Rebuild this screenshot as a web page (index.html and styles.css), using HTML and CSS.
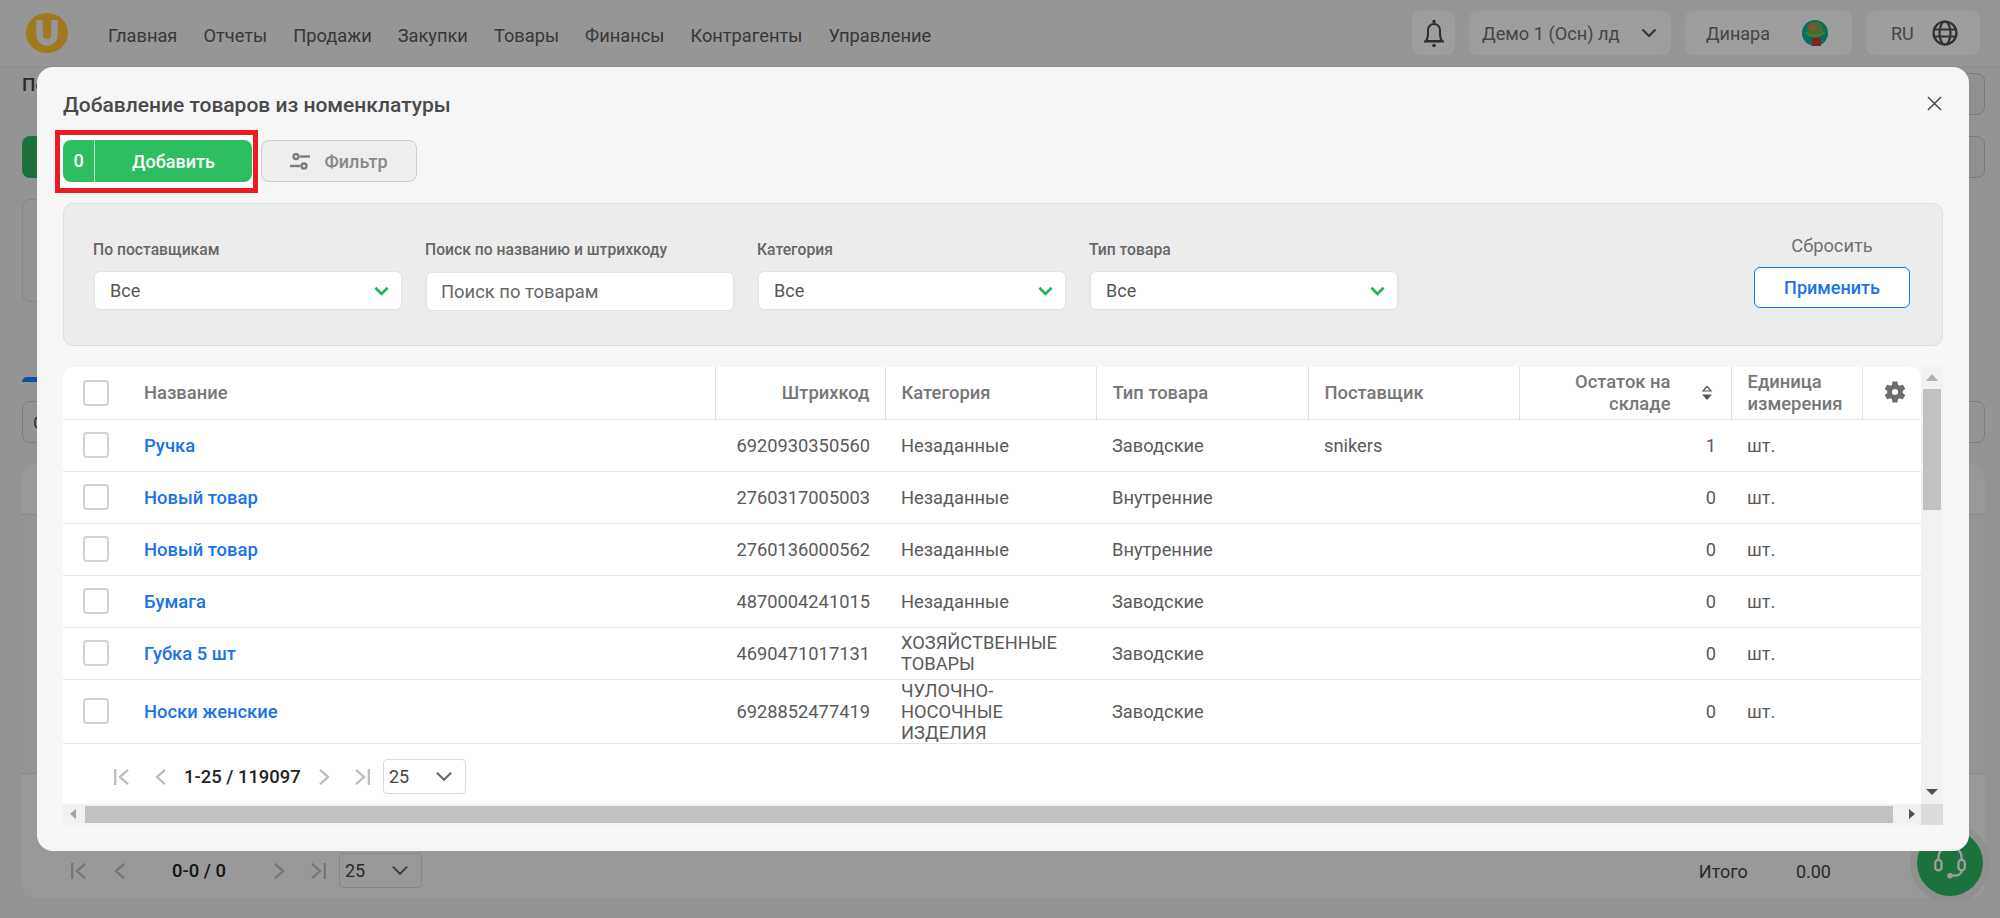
FILE: index.html
```html
<!DOCTYPE html>
<html lang="ru">
<head>
<meta charset="utf-8">
<title>Добавление товаров из номенклатуры</title>
<link rel="stylesheet" href="styles.css">
</head>
<body>
<svg class="sprite" aria-hidden="true">
  <symbol id="chev" viewBox="0 0 16 10"><path d="M1.500 1.500 8 8l6.500-6.500" fill="none" stroke="currentColor"/></symbol>
  <symbol id="first" viewBox="0 0 15 16"><path d="M1.200 0v16" stroke="currentColor" fill="none"/><path d="M14 .8 6 8l8 7.200" stroke="currentColor" fill="none"/></symbol>
  <symbol id="prev" viewBox="0 0 11 16"><path d="M10 .8 2 8l8 7.200" stroke="currentColor" fill="none"/></symbol>
  <symbol id="next" viewBox="0 0 11 16"><path d="M1 .8 9 8l-8 7.200" stroke="currentColor" fill="none"/></symbol>
  <symbol id="last" viewBox="0 0 15 16"><path d="M13.800 0v16" stroke="currentColor" fill="none"/><path d="M1 .8 9 8l-8 7.200" stroke="currentColor" fill="none"/></symbol>
</svg>

<div class="page">
  <header class="topbar">
    <svg class="logo" viewBox="0 0 42 40"><ellipse cx="21" cy="20" rx="21" ry="20" fill="#ffc432"/><path d="M13.500 7v15a7.500 7.500 0 0 0 15 0V7" fill="none" stroke="#f2f2f2" stroke-width="6.500"/></svg>
    <nav class="nav">
      <a>Главная</a><a>Отчеты</a><a>Продажи</a><a>Закупки</a><a>Товары</a><a>Финансы</a><a>Контрагенты</a><a>Управление</a>
    </nav>
    <div class="top-actions">
      <div class="top-box bell-box">
        <svg class="bell" viewBox="0 0 22 30"><path d="M3 23c1.500-2 2-4 2-8v-3a6 6 0 0 1 12 0v3c0 4 .5 6 2 8z" fill="none" stroke="#4a4a4a" stroke-width="2"/><path d="M11 2v3" stroke="#4a4a4a" stroke-width="3"/><path d="M1 23.500h20" stroke="#4a4a4a" stroke-width="2"/><circle cx="11" cy="27.500" r="1.800" fill="#4a4a4a"/></svg>
      </div>
      <div class="top-box demo-box"><span>Демо 1 (Осн) лд</span><svg class="top-chev"><use href="#chev"/></svg></div>
      <div class="top-box user-box"><span>Динара</span>
        <svg class="avatar" viewBox="0 0 26 26"><circle cx="13" cy="13" r="13" fill="#0fae9a"/><circle cx="13" cy="9.500" r="8" fill="#7fa84e"/><circle cx="10.500" cy="7" r="3.500" fill="#c98a5a"/><path d="M3.500 12.500l4.500 3h10l4.500-3.500" stroke="#7fd048" stroke-width="1.800" fill="none"/><path d="M10 18h9v8h-9z" fill="#d23b30"/></svg>
      </div>
      <div class="top-box lang-box"><span>RU</span>
        <svg class="globe" viewBox="0 0 26 26" fill="none" stroke="#4f4f4f" stroke-width="2.200"><circle cx="13" cy="13" r="11.500"/><ellipse cx="13" cy="13" rx="5.500" ry="11.500"/><path d="M2 9.500h22M2 16.500h22"/></svg>
      </div>
    </div>
  </header>

  <main class="under">
    <h1 class="under-title">Поступление</h1>
    <div class="under-actions">
      <div class="under-green"></div>
      <div class="under-side-stack"><div class="under-small"></div><div class="under-small"></div></div>
    </div>
    <div class="under-panel"></div>
    <div class="under-tab"></div>
    <div class="under-search">Склад</div>
    <div class="under-card">
      <div class="under-head"></div>
      <div class="under-body"></div>
      <div class="under-foot">
        <div class="pager pager-under">
          <svg class="pg pg-first"><use href="#first"/></svg>
          <svg class="pg pg-prev"><use href="#prev"/></svg>
          <b class="pg-count">0-0 / 0</b>
          <svg class="pg pg-next"><use href="#next"/></svg>
          <svg class="pg pg-last"><use href="#last"/></svg>
          <div class="pg-size"><span>25</span><svg class="pg-chev"><use href="#chev"/></svg></div>
        </div>
        <div class="under-total"><span>Итого</span><span>0.00</span></div>
      </div>
    </div>
  </main>

  <div class="chat">
    <svg viewBox="0 0 36 36" fill="none" stroke="#fff" stroke-width="2.200"><path d="M7 16v-3a11 11 0 0 1 22 0v3"/><rect x="4" y="15" width="6" height="10" rx="3"/><rect x="26" y="15" width="6" height="10" rx="3"/><path d="M29 25c0 3-3 5-7 5h-4"/><circle cx="18" cy="30" r="1.500" fill="#fff"/></svg>
  </div>

  <div class="overlay"></div>

  <section class="modal">
    <div class="modal-head">
      <h2 class="modal-title">Добавление товаров из номенклатуры</h2>
      <svg class="close" viewBox="0 0 16 16"><path d="M1 1l14 14M15 1 1 15" stroke="#3c4a55" stroke-width="1.600"/></svg>
    </div>

    <div class="toolbar">
      <div class="mark">
        <button class="add-btn"><span class="add-count">0</span><span class="add-label">Добавить</span></button>
      </div>
      <button class="filter-btn">
        <svg class="filter-ico" viewBox="0 0 20 17" fill="none" stroke="#7d7d7d" stroke-width="2.400"><circle cx="6" cy="3.500" r="2.500"/><path d="M10 3.500h10"/><circle cx="14" cy="13" r="2.500"/><path d="M0 13h10"/></svg>
        <span>Фильтр</span>
      </button>
    </div>

    <div class="filters">
      <div class="field">
        <label class="field-label">По поставщикам</label>
        <div class="select"><span>Все</span><svg class="sel-chev"><use href="#chev"/></svg></div>
      </div>
      <div class="field">
        <label class="field-label">Поиск по названию и штрихкоду</label>
        <div class="search">Поиск по товарам</div>
      </div>
      <div class="field">
        <label class="field-label">Категория</label>
        <div class="select"><span>Все</span><svg class="sel-chev"><use href="#chev"/></svg></div>
      </div>
      <div class="field">
        <label class="field-label">Тип товара</label>
        <div class="select"><span>Все</span><svg class="sel-chev"><use href="#chev"/></svg></div>
      </div>
      <div class="filter-actions">
        <span class="reset">Сбросить</span>
        <button class="apply">Применить</button>
      </div>
    </div>

    <div class="tablebox">
      <div class="table-area">
        <table class="grid">
          <colgroup>
            <col class="c-name"><col class="c-code"><col class="c-cat"><col class="c-type"><col class="c-sup"><col class="c-rest"><col class="c-unit"><col class="c-gear">
          </colgroup>
          <thead>
            <tr>
              <th><div class="name-cell"><i class="check"></i><span>Название</span></div></th>
              <th class="right">Штрихкод</th>
              <th>Категория</th>
              <th>Тип товара</th>
              <th>Поставщик</th>
              <th class="right rest-head"><div class="rest-wrap"><span>Остаток на складе</span>
                <svg class="sort" viewBox="0 0 12 16"><path d="M6 1.500 10 6H2z" fill="none" stroke="#555" stroke-width="1.200"/><path d="M1 9.500h10L6 15z" fill="#555"/></svg></div></th>
              <th>Единица измерения</th>
              <th class="gear-cell">
                <svg class="gear" viewBox="0 0 24 24"><path fill="#6e6e6e" fill-rule="evenodd" d="M19.140 12.940c.04-.3.06-.61.06-.94 0-.32-.02-.64-.07-.94l2.030-1.580a.49.49 0 0 0 .12-.61l-1.920-3.320a.488.488 0 0 0-.59-.22l-2.390.96c-.5-.38-1.030-.7-1.620-.94l-.36-2.540a.484.484 0 0 0-.48-.41h-3.840c-.24 0-.43.17-.47.41l-.36 2.540c-.59.24-1.130.57-1.620.94l-2.390-.96c-.22-.08-.47 0-.59.22L2.740 8.870c-.12.21-.08.47.12.61l2.030 1.580c-.05.3-.09.63-.09.94s.02.64.07.94l-2.030 1.580a.49.49 0 0 0-.12.61l1.920 3.320c.12.22.37.29.59.22l2.390-.96c.5.38 1.030.7 1.620.94l.36 2.540c.05.24.24.41.48.41h3.840c.24 0 .44-.17.47-.41l.36-2.540c.59-.24 1.130-.56 1.620-.94l2.390.96c.22.08.47 0 .59-.22l1.920-3.320c.12-.22.07-.47-.12-.61l-2.010-1.580zM12 14.800a2.800 2.800 0 1 1 0-5.600 2.800 2.800 0 0 1 0 5.600z"/></svg>
              </th>
            </tr>
          </thead>
          <tbody>
            <tr><td><div class="name-cell"><i class="check"></i><a>Ручка</a></div></td><td class="right">6920930350560</td><td>Незаданные</td><td>Заводские</td><td>snikers</td><td class="right">1</td><td>шт.</td><td></td></tr>
            <tr><td><div class="name-cell"><i class="check"></i><a>Новый товар</a></div></td><td class="right">2760317005003</td><td>Незаданные</td><td>Внутренние</td><td></td><td class="right">0</td><td>шт.</td><td></td></tr>
            <tr><td><div class="name-cell"><i class="check"></i><a>Новый товар</a></div></td><td class="right">2760136000562</td><td>Незаданные</td><td>Внутренние</td><td></td><td class="right">0</td><td>шт.</td><td></td></tr>
            <tr><td><div class="name-cell"><i class="check"></i><a>Бумага</a></div></td><td class="right">4870004241015</td><td>Незаданные</td><td>Заводские</td><td></td><td class="right">0</td><td>шт.</td><td></td></tr>
            <tr><td><div class="name-cell"><i class="check"></i><a>Губка 5 шт</a></div></td><td class="right">4690471017131</td><td>ХОЗЯЙСТВЕННЫЕ ТОВАРЫ</td><td>Заводские</td><td></td><td class="right">0</td><td>шт.</td><td></td></tr>
            <tr class="tall"><td><div class="name-cell"><i class="check"></i><a>Носки женские</a></div></td><td class="right">6928852477419</td><td>ЧУЛОЧНО-НОСОЧНЫЕ ИЗДЕЛИЯ</td><td>Заводские</td><td></td><td class="right">0</td><td>шт.</td><td></td></tr>
          </tbody>
        </table>
        <div class="pager pager-main">
          <svg class="pg pg-first"><use href="#first"/></svg>
          <svg class="pg pg-prev"><use href="#prev"/></svg>
          <b class="pg-count">1-25 / 119097</b>
          <svg class="pg pg-next"><use href="#next"/></svg>
          <svg class="pg pg-last"><use href="#last"/></svg>
          <div class="pg-size"><span>25</span><svg class="pg-chev"><use href="#chev"/></svg></div>
        </div>
      </div>
      <div class="vbar"><i class="arrow up"></i><div class="vthumb"></div><i class="arrow down"></i></div>
      <div class="hbar"><i class="arrow left"></i><div class="hthumb"></div><i class="arrow right"></i></div>
      <div class="corner"></div>
    </div>
  </section>
</div>
</body>
</html>
```

FILE: styles.css
```css
* { box-sizing: border-box; }
html, body { margin: 0; padding: 0; }
body { font-family: Roboto, "Liberation Sans", sans-serif; color: #555; overflow: hidden; }
.sprite { display: none; }
button { font-family: inherit; cursor: pointer; }
h1, h2 { margin: 0; }

.page { position: relative; width: 2000px; height: 918px; background: #efefef; overflow: hidden; }

/* top bar */
.topbar { display: flex; align-items: center; height: 67px; padding: 0 20px 0 26px; background: #f2f2f2; border-bottom: 1px solid #e4e4e4; }
.logo { width: 42px; height: 40px; flex: none; }
.nav { display: flex; gap: 26px; margin-left: 40px; font-size: 18.25px; color: #5a5a5a; padding-top: 4px; }
.top-actions { display: flex; gap: 14px; margin-left: auto; align-items: center; }
.top-box { display: flex; align-items: center; height: 44px; background: #fff; border-radius: 8px; font-size: 18px; color: #707070; }
.bell-box { width: 43px; justify-content: center; }
.bell { width: 22px; height: 30px; }
.demo-box { width: 202px; padding: 0 14px 0 13px; justify-content: space-between; font-size: 18.200px; }
.top-chev { width: 16px; height: 10px; color: #555; stroke-width: 2.200; }
.user-box { width: 167px; padding: 0 24px 0 21px; justify-content: space-between; }
.avatar { width: 26px; height: 26px; }
.lang-box { width: 114px; padding: 0 22px 0 25px; justify-content: space-between; }
.globe { width: 26px; height: 26px; }

/* page below the dialog */
.under { padding: 0 15px 0 22px; }
.under-title { font-size: 19px; font-weight: 500; color: #444; line-height: 24px; margin-top: 6px; }
.under-actions { display: flex; justify-content: space-between; }
.under-green { width: 120px; height: 42px; margin-top: 39px; background: #2cb961; border-radius: 8px; }
.under-side-stack { display: flex; flex-direction: column; gap: 21px; margin-top: -24px; }
.under-small { width: 120px; height: 42px; border: 1px solid #c4c4c4; border-radius: 8px; background: #e8e8e8; }
.under-panel { width: 1000px; height: 103px; margin-top: 21px; border: 1px solid #d8d8d8; border-radius: 8px; }
.under-tab { width: 120px; height: 5px; margin-top: 75px; background: #1a80ff; border-radius: 6px 6px 0 0; }
.under-search { height: 42px; margin-top: 19px; padding: 10px 10px; border: 1px solid #c8c8c8; border-radius: 8px; font-size: 18px; }
.under-card { height: 434px; margin-top: 21px; margin-left: -1px; background: #f7f7f7; border-radius: 14px; display: flex; flex-direction: column; }
.under-head { height: 51px; border-bottom: 1px solid #dedede; flex: none; }
.under-body { height: 259px; border-bottom: 1px solid #dedede; flex: none; background: #f0f0f0; }
.under-foot { flex: 1; display: flex; justify-content: space-between; align-items: flex-start; padding: 79px 154px 0 50px; }
.under-total { display: flex; gap: 48px; font-size: 18px; color: #444; padding-top: 8px; }

.chat { position: absolute; left: 1917px; top: 830px; width: 66px; height: 66px; display: flex; align-items: center; justify-content: center; border-radius: 50%; background: #2cb961; box-shadow: 0 0 0 7px #e8e8e8; }
.chat svg { width: 38px; height: 38px; }

.overlay { position: absolute; inset: 0; background: rgba(0, 0, 0, .38); }

/* dialog */
.modal { position: absolute; left: 37px; top: 67px; width: 1932px; height: 784px; padding: 0 26px; background: #f6f6f6; border-radius: 16px; }
.modal-head { display: flex; justify-content: space-between; align-items: center; height: 63px; padding-top: 13px; }
.modal-title { font-size: 21px; font-weight: 500; color: #4a4a4a; }
.close { width: 15px; height: 15px; margin-right: 1px; margin-top: -4px; }

.toolbar { display: flex; align-items: flex-start; gap: 3px; margin-left: -8px; }
.mark { padding: 5px 1px 6px 3px; border: 5px solid #ed1c24; background: #fff; }
.add-btn { display: flex; width: 189px; height: 42px; padding: 0; border: 0; border-radius: 8px; background: #2dbe60; color: #fff; font-size: 18px; font-weight: 500; align-items: center; }
.add-count { width: 32px; height: 100%; line-height: 42px; border-right: 1px solid #b8ebc9; text-align: center; }
.add-label { flex: 1; text-align: center; }
.filter-btn { display: flex; align-items: center; justify-content: center; gap: 14px; width: 156px; height: 42px; margin-top: 10px; background: #eee; border: 1px solid #ccc; border-radius: 8px; color: #888; font-size: 18px; font-weight: 500; }
.filter-ico { width: 20px; height: 17px; }

.filters { display: flex; align-items: flex-start; gap: 24.500px; height: 143px; margin-top: 10px; padding: 32px 32px 0 30px; background: #ececec; border: 1px solid #ddd; border-radius: 10px; }
.field { width: 307.500px; margin-top: 3px; }
.field-label { display: block; height: 32px; line-height: 22px; font-size: 15.700px; font-weight: 500; color: #666; margin-left: -1px; }
.select, .search { display: flex; align-items: center; height: 39px; background: #fff; border: 1px solid #e2e2e2; border-radius: 6px; font-size: 18px; color: #555; }
.select { justify-content: space-between; padding: 0 12px 0 15px; }
.search { padding-left: 14px; color: #666; margin-top: 1px; font-size: 18.400px; }
.sel-chev { width: 15px; height: 10px; color: #22b45c; stroke-width: 2.800; }
.filter-actions { margin-left: auto; width: 156px; display: flex; flex-direction: column; align-items: center; }
.reset { font-size: 18.300px; line-height: 20px; color: #707070; margin-bottom: 11px; }
.apply { width: 156px; height: 41px; background: #fff; border: 1px solid #1a73e8; border-radius: 6px; color: #1a73e8; font-size: 18px; font-weight: 500; }

/* table */
.tablebox { display: grid; grid-template-columns: 1858px 22px; grid-template-rows: 437px 21px; margin-top: 21px; }
.table-area { background: #fff; border-radius: 10px 10px 0 0; }
.grid { width: 1858px; table-layout: fixed; border-collapse: collapse; font-size: 18.300px; color: #5a5a5a; }
.c-name { width: 652px; }
.c-code { width: 170px; }
.c-cat { width: 211px; }
.c-type { width: 212px; }
.c-sup { width: 211px; }
.c-rest { width: 212px; }
.c-unit { width: 131px; }
.c-gear { width: 59px; }
.grid tr { height: 52px; border-bottom: 1px solid #e6e6e6; }
.grid tr.tall { height: 64px; }
.grid th, .grid td { padding: 0 15px 0 16px; text-align: left; line-height: 21px; }
.grid th { font-weight: 500; color: #777; border-left: 1px solid #e0e0e0; line-height: 22px; font-size: 18.400px; }
.grid th:first-child { border-left: 0; }
.grid th:first-child, .grid td:first-child { padding: 0 0 0 20px; }
.grid .right { text-align: right; }
.name-cell { display: flex; align-items: center; gap: 35px; }
.name-cell a { color: #1a73e8; font-weight: 500; font-size: 18.400px; }
.check { flex: none; width: 26px; height: 26px; background: #fff; border: 2px solid #cdd3d9; border-radius: 4px; }
.grid .rest-head { padding-right: 18px; }
.rest-wrap { display: flex; align-items: center; justify-content: flex-end; gap: 30px; }
.rest-wrap span { width: 130px; }
.sort { width: 12px; height: 16px; flex: none; }
.grid .gear-cell { padding: 0 0 2px 7px; }
.gear { width: 26px; height: 26px; display: block; margin: 0 auto; }

/* pager */
.pager { display: flex; align-items: center; color: #bdbdbd; stroke-width: 2.300; }
.pager-main { height: 60px; padding: 6px 0 0 51px; }
.pager-under { height: 35px; }
.pg { flex: none; height: 16px; }
.pg-first { width: 15px; }
.pg-last { width: 15px; }
.pg-prev, .pg-next { width: 11px; }
.pager-main .pg-prev { margin-left: 26px; }
.pager-main .pg-count { width: 153px; padding-left: 18px; }
.pager-main .pg-last { margin-left: 25px; }
.pager-main .pg-size { margin-left: 13px; }
.pager-under .pg-prev { margin-left: 28px; }
.pager-under .pg-count { width: 149px; padding-left: 47px; }
.pager-under .pg-last { margin-left: 26px; }
.pager-under .pg-size { margin-left: 13px; background: transparent; }
.pg-count { font-size: 18.400px; font-weight: 500; color: #222; white-space: nowrap; }
.pg-size { display: flex; align-items: center; justify-content: space-between; width: 83px; height: 35px; padding: 0 12px 0 5px; background: #fff; border: 1px solid #d5dbe1; border-radius: 4px; font-size: 18px; color: #444; }
.pg-chev { width: 18px; height: 11px; color: #5a6570; stroke-width: 1.800; }

/* scrollbars */
.vbar { position: relative; background: #f1f1f1; padding: 22px 2px 0 2px; }
.vthumb { height: 121px; background: #c1c1c1; }
.hbar { position: relative; background: #f1f1f1; padding: 2px 28px 2px 22px; height: 21px; }
.hthumb { height: 17px; background: #c1c1c1; }
.corner { background: #dcdcdc; }
.arrow { position: absolute; width: 0; height: 0; border-style: solid; border-color: transparent; }
.arrow.up { left: 5px; top: 7px; border-width: 0 6px 7px; border-bottom-color: #b0b0b0; }
.arrow.down { left: 5px; bottom: 9px; border-width: 6px 6px 0; border-top-color: #505050; }
.arrow.left { left: 7px; top: 5px; border-width: 5px 6px 5px 0; border-right-color: #a3a3a3; }
.arrow.right { right: 6px; top: 5px; border-width: 5px 0 5px 6px; border-left-color: #505050; }
```
